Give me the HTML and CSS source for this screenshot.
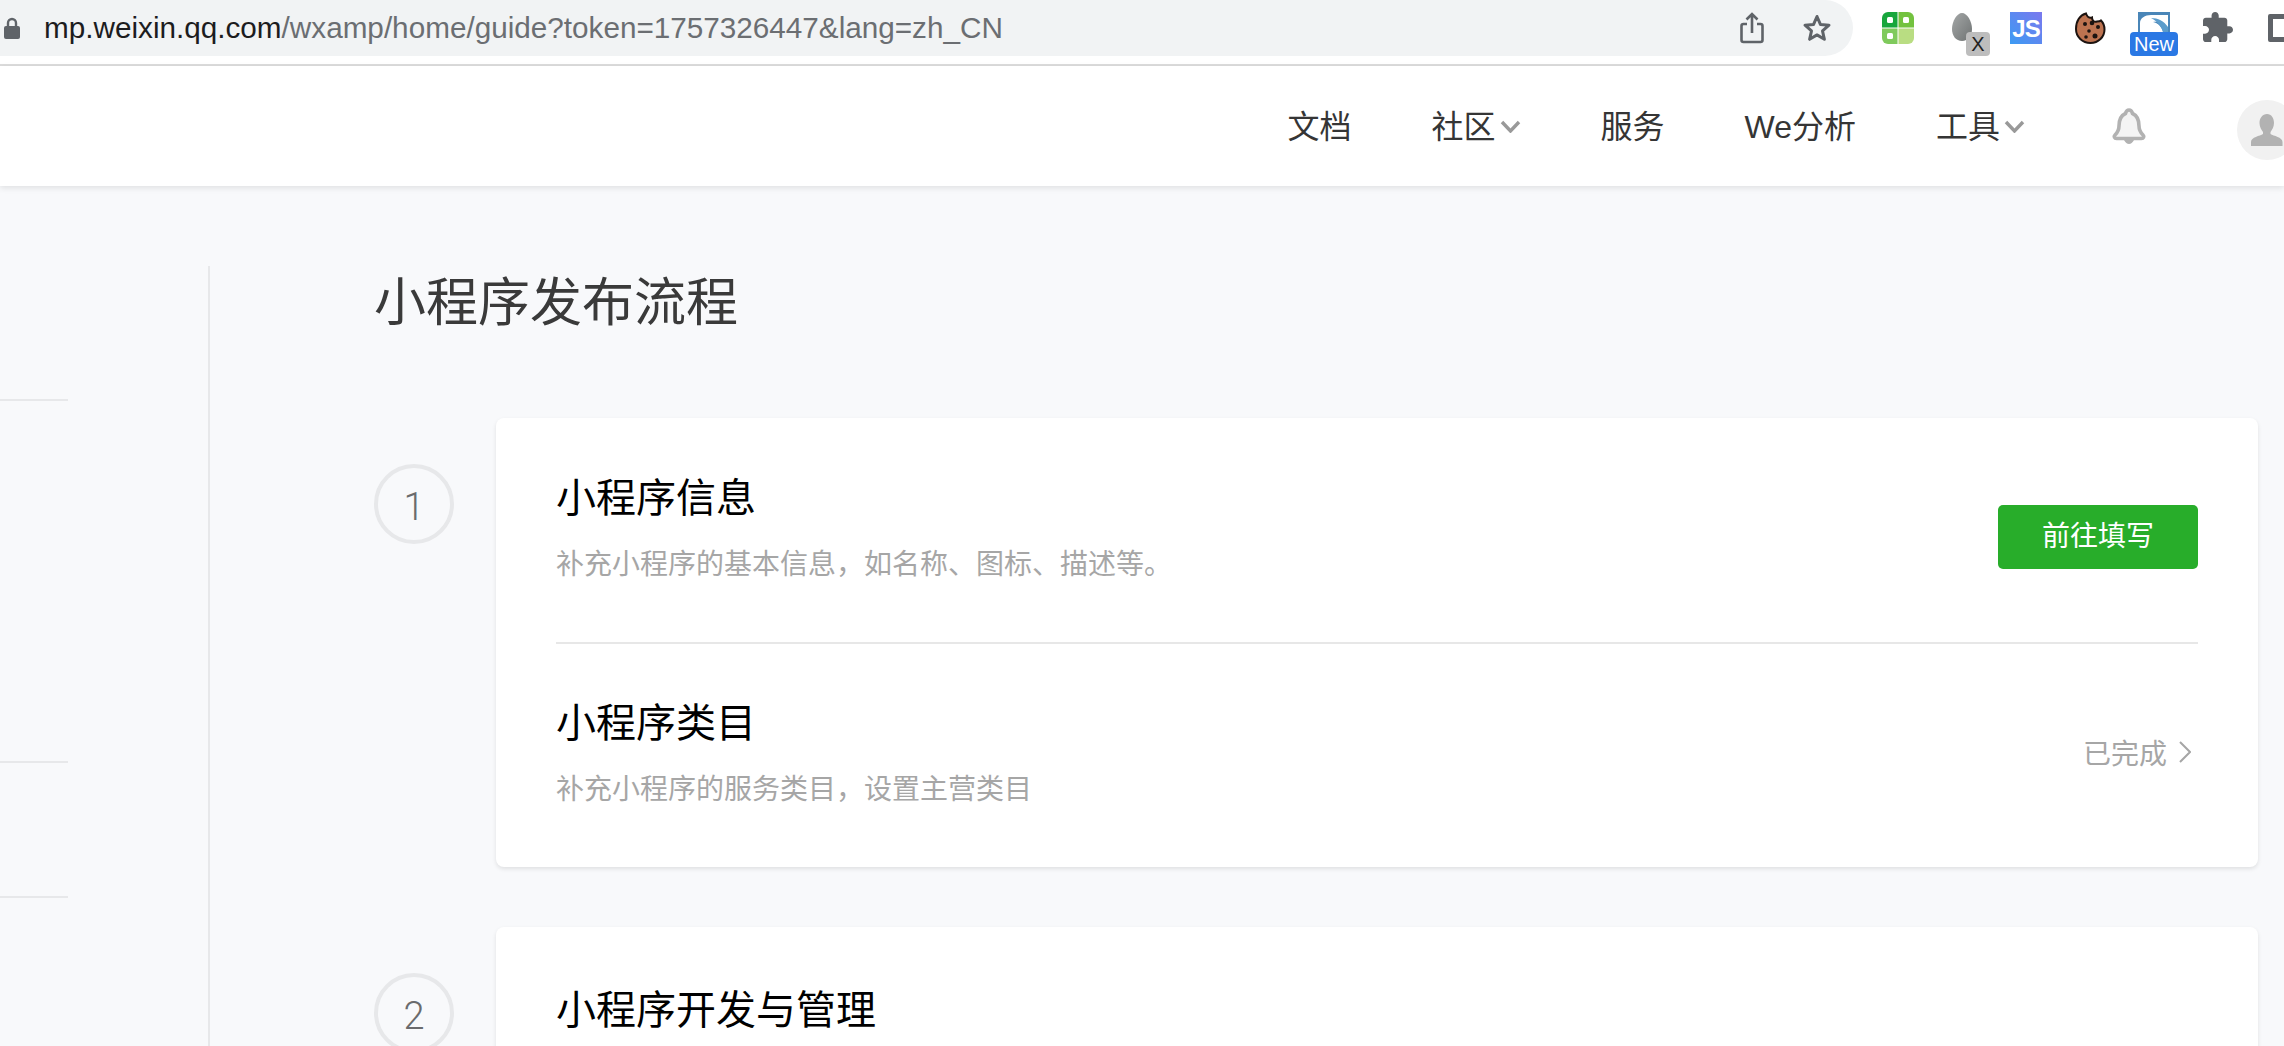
FILE: index.html
```html
<!DOCTYPE html>
<html lang="zh-CN">
<head>
    <meta charset="UTF-8">
    <meta name="viewport" content="width=device-width, initial-scale=1.0">
    <title>小程序发布流程</title>
    <link rel="stylesheet" href="styles.css">
</head>
<body>

    <div class="toolbar">
        <div class="url-bar">
            <svg class="lock" width="16" height="22" viewBox="0 0 16 22">
                <path d="M4 10V6a4 4 0 0 1 8 0v4" fill="none" stroke="#5f6368" stroke-width="2.4"/>
                <rect y="9" width="16" height="13" rx="2" fill="#5f6368"/>
            </svg>
            <div class="url"><span class="url-host">mp.weixin.qq.com</span>/wxamp/home/guide?token=1757326447&amp;lang=zh_CN</div>
            <svg class="share" width="24" height="32" viewBox="0 0 24 32" fill="none" stroke="#5f6368" stroke-width="2.6">
                <path d="M7 12H3.500a2 2 0 0 0-2 2v14a2 2 0 0 0 2 2h17a2 2 0 0 0 2-2V14a2 2 0 0 0-2-2H17"/>
                <path d="M12 21V2M6.500 7.500 12 2l5.500 5.500"/>
            </svg>
            <svg class="star" width="30" height="30" viewBox="0 0 30 30" fill="none" stroke="#5f6368" stroke-width="3">
                <path d="M15 3.500l3.400 7.900 8.600.8-6.500 5.700 1.900 8.400L15 21.900l-7.400 4.400 1.900-8.400L3 12.200l8.600-.8z" stroke-linejoin="round"/>
            </svg>
        </div>
        <div class="ext-list">
            <div class="ext">
                <svg width="32" height="32" viewBox="0 0 32 32">
                    <path d="M0 6a6 6 0 0 1 6-6h9.500v15.500H0z" fill="#17a63c"/>
                    <path d="M16.500 0H26a6 6 0 0 1 6 6v9.500H16.500z" fill="#73c23f"/>
                    <path d="M0 16.500h15.500V32H6a6 6 0 0 1-6-6z" fill="#7fca5c"/>
                    <path d="M16.500 16.500H32V26a6 6 0 0 1-6 6h-9.500z" fill="#b9dd82"/>
                    <rect x="5" y="5" width="6" height="6" rx="1.500" fill="#fff"/>
                    <rect x="21" y="5" width="6" height="6" rx="1.500" fill="#fff"/>
                    <rect x="5" y="21" width="6" height="6" rx="1.500" fill="#fff"/>
                </svg>
            </div>
            <div class="ext">
                <svg class="egg" width="20" height="28" viewBox="0 0 20 28">
                    <defs>
                        <linearGradient id="eggFill" x1="0" x2="1" y1="0" y2="1">
                            <stop offset="0" stop-color="#a4a7a7"/>
                            <stop offset="1" stop-color="#6f7373"/>
                        </linearGradient>
                    </defs>
                    <path d="M10 0c5 0 10 8 10 16 0 7-4 12-10 12S0 23 0 16C0 8 5 0 10 0z" fill="url(#eggFill)"/>
                </svg>
                <span class="badge badge-x">X</span>
            </div>
            <div class="ext">
                <div class="js-logo">JS</div>
            </div>
            <div class="ext">
                <svg width="32" height="32" viewBox="0 0 32 32">
                    <path d="M12 1.500c1 3 3 5 6 4 0 3 2 5 5 4 1 0 3 0 4-1 2.500 2.500 3.500 6 3.500 9 0 7.500-6 13.500-14 13.500S2 25 2 17C2 9 6 3 12 1.500z" fill="#bd7350" stroke="#1c1310" stroke-width="2"/>
                    <circle cx="18" cy="11" r="2.300" fill="#1c1310"/>
                    <circle cx="11" cy="12" r="2" fill="#1c1310"/>
                    <circle cx="24" cy="15" r="2" fill="#1c1310"/>
                    <circle cx="15" cy="19" r="1.800" fill="#1c1310"/>
                    <circle cx="21" cy="24" r="2.500" fill="#1c1310"/>
                    <circle cx="12" cy="25" r="1.800" fill="#1c1310"/>
                </svg>
            </div>
            <div class="ext">
                <svg width="32" height="20" viewBox="0 0 32 20">
                    <rect width="32" height="20" fill="#4a86b8"/>
                    <path d="M2 20V11C2 6 7 3 13 3h17v14c-5-7-11-8-15-7 5 1 9 5 10 10z" fill="#fff"/>
                    <path d="M13 6c7 0 13 3 17 9v5h-5c-1-5-6-11-12-14z" fill="#5b9ccb"/>
                </svg>
                <span class="badge badge-new">New</span>
            </div>
            <div class="ext">
                <svg width="30" height="30" viewBox="2 1 21 21">
                    <path fill="#5f6368" d="M20.500 11H19V7c0-1.100-.9-2-2-2h-4V3.500C13 2.120 11.880 1 10.500 1S8 2.120 8 3.500V5H4c-1.100 0-1.990.9-1.990 2v3.800H3.500c1.490 0 2.700 1.210 2.700 2.700s-1.210 2.700-2.700 2.700H2V20c0 1.100.9 2 2 2h3.800v-1.500c0-1.490 1.210-2.700 2.700-2.700 1.490 0 2.700 1.210 2.700 2.700V22H17c1.100 0 2-.9 2-2v-4h1.500c1.380 0 2.500-1.120 2.500-2.500S21.880 11 20.500 11z"/>
                </svg>
            </div>
            <div class="ext">
                <div class="window-btn"></div>
            </div>
        </div>
    </div>

    <div class="nav">
        <a class="nav-item">文档</a>
        <a class="nav-item">社区<svg class="caret" width="21" height="13" viewBox="0 0 21 13"><path d="M2 2l8.500 9L19 2" fill="none" stroke="#999" stroke-width="3.400"/></svg></a>
        <a class="nav-item">服务</a>
        <a class="nav-item">We分析</a>
        <a class="nav-item">工具<svg class="caret" width="21" height="13" viewBox="0 0 21 13"><path d="M2 2l8.500 9L19 2" fill="none" stroke="#999" stroke-width="3.400"/></svg></a>
        <svg class="bell" width="36" height="36" viewBox="0 0 36 36" fill="none">
            <path d="M18 2c2 0 3 1.500 3.500 3.500C26 7.500 28 12 28 18c0 4 1 6 4 9 1.500 1.500.5 3.500-1.500 3.500h-25c-2 0-3-2-1.500-3.500 3-3 4-5 4-9 0-6 2-10.500 6.500-12.500C15 3.500 16 2 18 2z" fill="#f4f4f4" stroke="#b2b2b2" stroke-width="3.600"/>
            <path d="M13 32c1.500 2.500 3 4 5 4s3.500-1.500 5-4z" fill="#b2b2b2"/>
        </svg>
        <div class="avatar">
            <svg width="32" height="32" viewBox="0 0 32 32">
                <path d="M16 0c4.500 0 7 4 7 9 0 4-2 7-3.500 9v2c3 2 12 3 12 8v4H0v-4c0-5 9-6 12-8v-2c-1.500-2-3.500-5-3.500-9 0-5 3-9 7.500-9z" fill="#b2b2b2"/>
            </svg>
        </div>
    </div>

    <div class="main">
        <div class="sidebar">
            <div class="side-group group-short"></div>
            <div class="side-group group-long"></div>
            <div class="side-group group-short"></div>
        </div>
        <div class="content">
            <h1>小程序发布流程</h1>

            <div class="step">
                <div class="step-num">1</div>
                <div class="card">
                    <div class="row">
                        <div>
                            <div class="row-title">小程序信息</div>
                            <div class="row-desc">补充小程序的基本信息，如名称、图标、描述等。</div>
                        </div>
                        <a class="btn">前往填写</a>
                    </div>
                    <div class="row">
                        <div>
                            <div class="row-title">小程序类目</div>
                            <div class="row-desc">补充小程序的服务类目，设置主营类目</div>
                        </div>
                        <a class="done">已完成<svg width="12" height="22" viewBox="0 0 12 22"><path d="M1 1l10 10L1 21" fill="none" stroke="#a6a6a6" stroke-width="2"/></svg></a>
                    </div>
                </div>
            </div>

            <div class="step">
                <div class="step-num">2</div>
                <div class="card">
                    <div class="row row-lower">
                        <div>
                            <div class="row-title">小程序开发与管理</div>
                        </div>
                    </div>
                </div>
            </div>
        </div>
    </div>

</body>
</html>
```

FILE: styles.css
```css
html, body {
    height: 100%;
}
body {
    margin: 0;
    width: 2284px;
    height: 1046px;
    overflow: hidden;
    background-color: #f8f9fb;
    font-family: "Liberation Sans", "Noto Sans CJK SC", sans-serif;
    color: #353535;
}

/* browser chrome */
.toolbar {
    display: flex;
    height: 64px;
    background: #fff;
    border-bottom: 2px solid #dcdcdc;
}
.url-bar {
    display: flex;
    align-items: center;
    flex-shrink: 0;
    width: 1853px;
    height: 56px;
    background: #f1f3f4;
    border-radius: 0 28px 28px 0;
    box-sizing: border-box;
    padding-left: 4px;
}
.lock {
    flex-shrink: 0;
}
.url {
    flex: 1;
    margin-left: 24px;
    font-size: 29.7px;
    color: #6b6e72;
    white-space: nowrap;
}
.url-host {
    color: #1c1c1e;
}
.share {
    margin-right: 38px;
}
.star {
    margin-right: 21px;
}
.ext-list {
    display: flex;
    flex-shrink: 0;
    padding-left: 13px;
}
.ext {
    position: relative;
    display: flex;
    justify-content: center;
    flex-shrink: 0;
    width: 64px;
    height: 64px;
    padding-top: 12px;
    box-sizing: border-box;
}
.egg {
    margin-top: 1px;
}
.badge {
    position: absolute;
    top: 32px;
    height: 24px;
    line-height: 25px;
    border-radius: 4px;
    text-align: center;
    font-size: 20px;
}
.badge-x {
    left: 36px;
    width: 24px;
    background: #bdbdbd;
    color: #222;
}
.badge-new {
    left: 8px;
    width: 48px;
    background: #2a78e4;
    color: #fff;
}
.js-logo {
    width: 32px;
    height: 32px;
    line-height: 33px;
    background: linear-gradient(45deg, #3b9bf3, #7b78ee);
    color: #fff;
    font-size: 24px;
    font-weight: bold;
    letter-spacing: -1px;
    text-align: center;
}
.window-btn {
    flex-shrink: 0;
    width: 28px;
    height: 28px;
    margin-top: 2px;
    box-sizing: border-box;
    border: 5px solid #5f6368;
    border-radius: 2px;
}

/* site header */
.nav {
    display: flex;
    align-items: center;
    justify-content: flex-end;
    height: 120px;
    background: #fff;
    box-shadow: 0 2px 6px rgba(0,0,0,0.1);
    position: relative;
}
.nav-item {
    display: flex;
    align-items: center;
    margin-right: 80px;
    margin-bottom: 5px;
    font-size: 32px;
    color: #353535;
}
.caret {
    margin-left: 4px;
    margin-top: 6px;
}
.bell {
    margin-left: 6px;
}
.avatar {
    display: flex;
    align-items: flex-end;
    justify-content: center;
    width: 60px;
    height: 60px;
    margin-top: 8px;
    margin-left: 90px;
    margin-right: -13px;
    padding-bottom: 14px;
    box-sizing: border-box;
    border-radius: 50%;
    background: #f1f1f1;
}

/* page */
.main {
    display: flex;
}
.sidebar {
    flex-shrink: 0;
    width: 208px;
    height: 800px;
    margin-top: 80px;
    border-right: 2px solid #e7e8ea;
}
.side-group {
    width: 68px;
    border-bottom: 2px solid #e7e8ea;
}
.group-short {
    height: 133px;
}
.group-long {
    height: 360px;
}
.content {
    flex: 1;
    padding: 81px 26px 0 164px;
}
h1 {
    margin: 0 0 79px;
    font-size: 52px;
    font-weight: 400;
    line-height: 72px;
    color: #3a3a3a;
}
.step {
    display: flex;
    margin-bottom: 60px;
}
.step-num {
    flex-shrink: 0;
    width: 80px;
    height: 80px;
    margin-top: 46px;
    margin-right: 42px;
    padding-top: 6px;
    box-sizing: border-box;
    border: 4px solid #e7e8ea;
    border-radius: 50%;
    font-family: Roboto, sans-serif;
    font-size: 38px;
    font-weight: 300;
    line-height: 66px;
    text-align: center;
    color: #6a6b6d;
}
.card {
    flex: 1;
    padding: 0 60px;
    background: #fff;
    border-radius: 8px;
    box-shadow: 0 2px 4px rgba(0,0,0,0.1);
}
.row {
    display: flex;
    align-items: center;
    justify-content: space-between;
    padding: 52px 0 57px;
}
.row + .row {
    padding-top: 51px;
    border-top: 2px solid #e7e7e7;
}
.row-lower {
    padding-top: 55px;
}
.row-title {
    font-size: 40px;
    line-height: 56px;
    color: #000;
}
.row-desc {
    margin-top: 19px;
    font-size: 28px;
    line-height: 40px;
    color: #a6a6a6;
}
.btn {
    width: 200px;
    height: 64px;
    margin-top: 18px;
    border-radius: 5px;
    background: #28ad2a;
    color: #fff;
    font-size: 28px;
    line-height: 64px;
    text-align: center;
}
.done {
    display: flex;
    align-items: center;
    gap: 12px;
    margin-right: 7px;
    margin-bottom: 2px;
    font-size: 28px;
    color: #a6a6a6;
}
```
